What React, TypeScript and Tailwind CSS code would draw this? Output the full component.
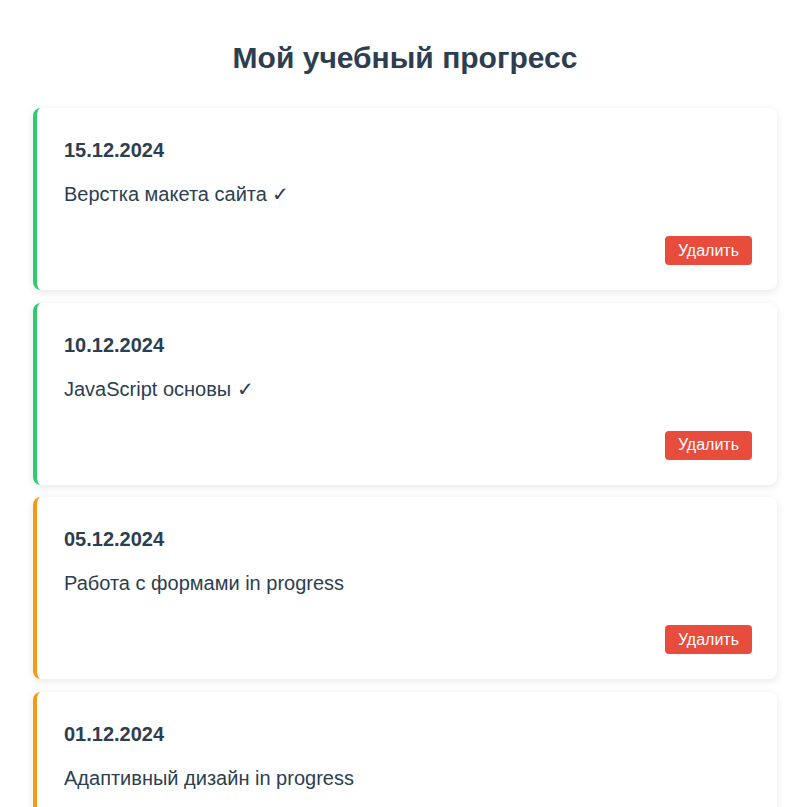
import React, { useState } from "react";

type Entry = {
  id: number;
  date: string;
  text: string;
  done: boolean;
};

const initialEntries: Entry[] = [
  { id: 1, date: "15.12.2024", text: "Верстка макета сайта ✓", done: true },
  { id: 2, date: "10.12.2024", text: "JavaScript основы ✓", done: true },
  { id: 3, date: "05.12.2024", text: "Работа с формами in progress", done: false },
  { id: 4, date: "01.12.2024", text: "Адаптивный дизайн in progress", done: false },
];

function EntryCard({ entry, onDelete }: { entry: Entry; onDelete: () => void }) {
  return (
    <div
      className={`rounded-lg bg-white border-l-4 pl-[27px] pr-[25px] pt-[30px] pb-[25px] shadow-[0_2px_8px_rgba(0,0,0,0.1)] ${
        entry.done ? "border-[#2ecc71]" : "border-[#f39c12]"
      }`}
    >
      <div className="text-[20px] leading-[24px] font-bold text-[#2c3e50]">{entry.date}</div>
      <p className="mt-[20px] text-[20px] leading-[24px] text-[#2c3e50]">{entry.text}</p>
      <div className="mt-[30px] flex justify-end">
        <button
          type="button"
          onClick={onDelete}
          className="h-[29px] rounded px-[13px] bg-[#e74c3c] text-white text-[16px] leading-none hover:bg-[#c0392b]"
        >
          Удалить
        </button>
      </div>
    </div>
  );
}

export default function App() {
  const [entries, setEntries] = useState<Entry[]>(initialEntries);

  return (
    <div className="min-h-screen bg-white font-['Liberation_Sans',Arial,sans-serif]">
      <div className="ml-[33px] w-[744px] pt-[40px] pb-10">
        <h1 className="text-center text-[30px] leading-[36px] font-bold text-[#2c3e50] mb-[32px]">
          Мой учебный прогресс
        </h1>
        <div className="flex flex-col gap-[12.5px]">
          {entries.map((e) => (
            <EntryCard
              key={e.id}
              entry={e}
              onDelete={() => setEntries((prev) => prev.filter((x) => x.id !== e.id))}
            />
          ))}
        </div>
      </div>
    </div>
  );
}
